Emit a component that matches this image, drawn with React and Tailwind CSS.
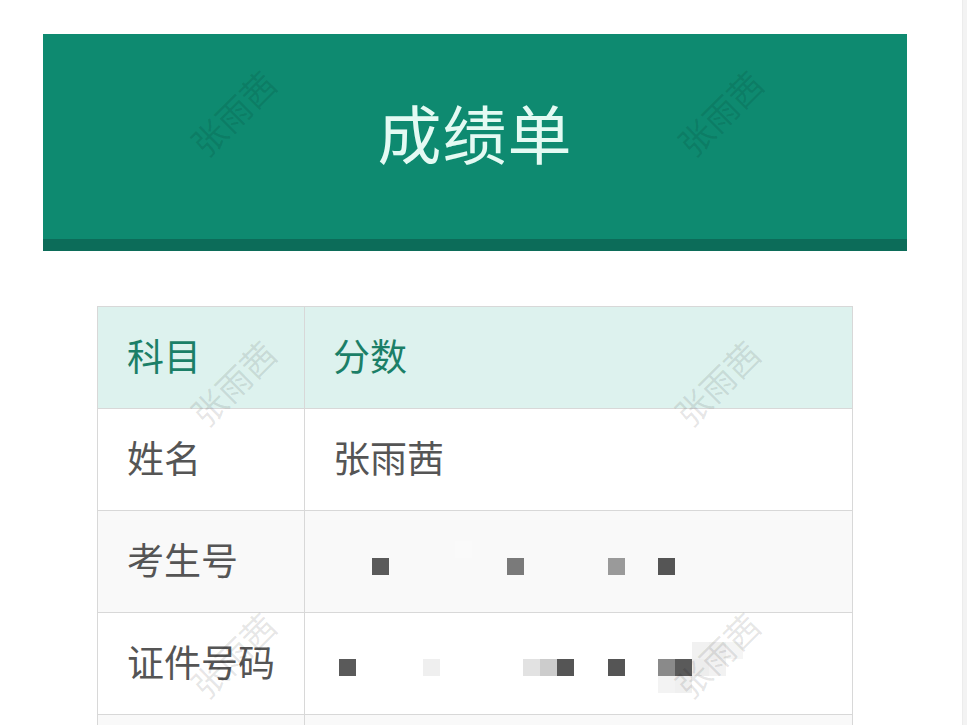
import React from "react";

const cjk = { fontFamily: '"Noto Sans CJK SC", "Noto Sans", sans-serif' };

function Pix({ cells }) {
  return (
    <svg width="547" height="101" className="block">
      {cells.map(([x, y, c], i) => (
        <rect key={i} x={x} y={y} width="17" height="17" fill={c} />
      ))}
    </svg>
  );
}

const row3 = [
  [67, 47, "#5a5a5a"],
  [150, 30, "#fafafa"],
  [202, 47, "#7a7a7a"],
  [303, 47, "#9a9a9a"],
  [353, 47, "#555555"],
];
const row4 = [
  [34, 46, "#5a5a5a"],
  [118, 46, "#efefef"],
  [218, 46, "#e2e2e2"],
  [235, 46, "#cccccc"],
  [252, 46, "#555555"],
  [303, 46, "#555555"],
  [353, 46, "#8a8a8a"],
  [370, 46, "#5a5a5a"],
  [387, 46, "#ededed"],
  [404, 46, "#f2f2f2"],
  [370, 63, "#f0f0f0"],
  [353, 63, "#f3f3f3"],
  [387, 29, "#f1f1f1"],
  [404, 29, "#eeeeee"],
  [421, 29, "#f5f5f5"],
];

function Watermark({ className }) {
  return (
    <div
      className={`absolute pointer-events-none -translate-x-1/2 -translate-y-1/2 -rotate-45 text-[34px] leading-none whitespace-nowrap ${className}`}
      style={cjk}
    >
      张雨茜
    </div>
  );
}

export default function App() {
  const rows = [
    { k: "姓名", bg: "bg-white", v: <span className="pl-[28px] text-[37px] text-[#555]">张雨茜</span> },
    { k: "考生号", bg: "bg-[#f9f9f9]", v: <Pix cells={row3} /> },
    { k: "证件号码", bg: "bg-white", v: <Pix cells={row4} /> },
    { k: "", bg: "bg-[#f9f9f9]", v: null },
  ];
  return (
    <div className="relative w-[967px] h-[725px] overflow-hidden bg-white" style={cjk}>
      <div className="flex h-full">
        <div className="flex-1 flex flex-col items-start pt-[34px] pl-[43px]">
          <div className="shrink-0 w-[864px] h-[217px] bg-[#0e8a70] border-b-[12px] border-[#0c6c59] flex items-center justify-center">
            <h1 className="text-[64px] leading-none text-[#e4faf3] tracking-[1px] pb-[12px]">成绩单</h1>
          </div>
          <div className="shrink-0 mt-[55px] ml-[54px] w-[756px] border-l border-r border-t border-[#d8d8d8]">
            <div className="grid grid-cols-[207px_1fr] h-[102px] bg-[#ddf2ee] border-b border-[#d8d8d8]">
              <div className="flex items-center pl-[29px] pb-[4px] border-r border-[#d8d8d8] text-[37px] text-[#1b7f67]">科目</div>
              <div className="flex items-center pl-[28px] pb-[4px] text-[37px] text-[#1b7f67]">分数</div>
            </div>
            {rows.map((r, i) => (
              <div key={i} className={`grid grid-cols-[207px_1fr] h-[102px] ${r.bg} border-b border-[#d8d8d8]`}>
                <div className="flex items-center pl-[29px] pb-[4px] border-r border-[#d8d8d8] text-[37px] text-[#555]">{r.k}</div>
                <div className={`flex items-center ${i === 0 ? "pb-[4px]" : ""}`}>{r.v}</div>
              </div>
            ))}
          </div>
        </div>
        <div className="w-[5px] h-full bg-[#f3f3f3] border-l border-[#ececec]" />
      </div>
      <Watermark className="left-[233px] top-[113px] text-black/10" />
      <Watermark className="left-[720px] top-[113px] text-black/10" />
      <Watermark className="left-[233px] top-[383px] text-black/10" />
      <Watermark className="left-[717px] top-[383px] text-black/10" />
      <Watermark className="left-[233px] top-[655px] text-black/10" />
      <Watermark className="left-[717px] top-[655px] text-black/10" />
    </div>
  );
}
